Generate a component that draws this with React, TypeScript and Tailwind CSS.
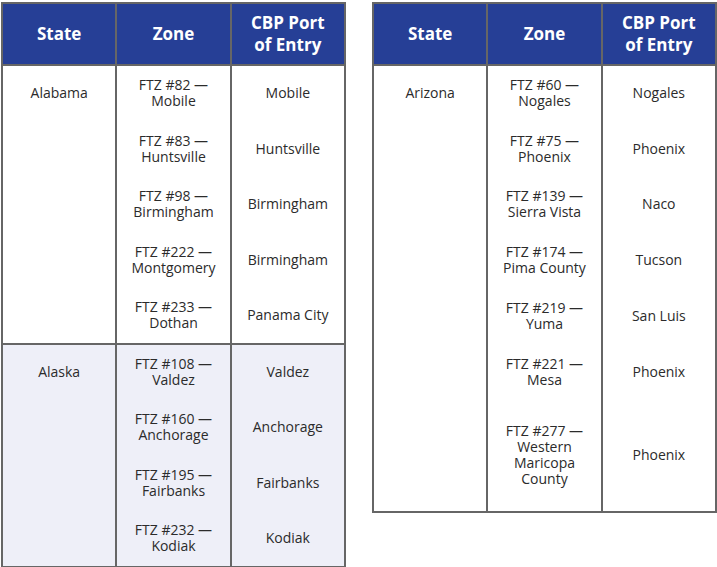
type Row = { state?: string; zone: string[]; port: string; h?: string };
type Group = { shade?: boolean; rows: Row[] };

const left: Group[] = [
  {
    rows: [
      { state: "Alabama", zone: ["FTZ #82 —", "Mobile"], port: "Mobile" },
      { zone: ["FTZ #83 —", "Huntsville"], port: "Huntsville" },
      { zone: ["FTZ #98 —", "Birmingham"], port: "Birmingham" },
      { zone: ["FTZ #222 —", "Montgomery"], port: "Birmingham" },
      { zone: ["FTZ #233 —", "Dothan"], port: "Panama City" },
    ],
  },
  {
    shade: true,
    rows: [
      { state: "Alaska", zone: ["FTZ #108 —", "Valdez"], port: "Valdez" },
      { zone: ["FTZ #160 —", "Anchorage"], port: "Anchorage" },
      { zone: ["FTZ #195 —", "Fairbanks"], port: "Fairbanks" },
      { zone: ["FTZ #232 —", "Kodiak"], port: "Kodiak" },
    ],
  },
];

const right: Group[] = [
  {
    rows: [
      { state: "Arizona", zone: ["FTZ #60 —", "Nogales"], port: "Nogales" },
      { zone: ["FTZ #75 —", "Phoenix"], port: "Phoenix" },
      { zone: ["FTZ #139 —", "Sierra Vista"], port: "Naco" },
      { zone: ["FTZ #174 —", "Pima County"], port: "Tucson" },
      { zone: ["FTZ #219 —", "Yuma"], port: "San Luis" },
      { zone: ["FTZ #221 —", "Mesa"], port: "Phoenix" },
      {
        zone: ["FTZ #277 —", "Western", "Maricopa", "County"],
        port: "Phoenix",
        h: "h-[112px]",
      },
    ],
  },
];

const ZoneTable = ({ groups }: { groups: Group[] }) => {
  return (
    <table className="w-[345px] table-fixed border-collapse border-2 border-[#666] text-[14px] leading-[16px] text-[#2b2b2b]">
      <thead>
        <tr className="h-[62px] bg-[#263f96] text-[17px] font-bold leading-[22px] text-white">
          <th className="border-x-2 border-[#666] font-bold">State</th>
          <th className="border-x-2 border-[#666] font-bold">Zone</th>
          <th className="border-x-2 border-[#666] font-bold">
            CBP Port
            <br />
            of Entry
          </th>
        </tr>
      </thead>
      {groups.map((group, gi) => (
        <tbody
          key={gi}
          className={
            group.shade
              ? "border-t-2 border-[#666] bg-[#eeeff8]"
              : "border-t-2 border-[#666] bg-white"
          }
        >
          {group.rows.map((row, ri) => (
            <tr key={ri} className={row.h ?? "h-[55.75px]"}>
              <td className="border-x-2 border-[#666] text-center align-middle">
                {row.state}
              </td>
              <td className="border-x-2 border-[#666] text-center align-middle">
                {row.zone.map((line, li) => (
                  <div key={li}>{line}</div>
                ))}
              </td>
              <td className="border-x-2 border-[#666] text-center align-middle">
                {row.port}
              </td>
            </tr>
          ))}
        </tbody>
      ))}
    </table>
  );
};

export default function App() {
  return (
    <div className="min-h-[567px] w-[717px] bg-white font-['Open_Sans',sans-serif]">
      <div className="flex items-start gap-[26px] pl-[1px] pt-[2px]">
        <ZoneTable groups={left} />
        <ZoneTable groups={right} />
      </div>
    </div>
  );
}
